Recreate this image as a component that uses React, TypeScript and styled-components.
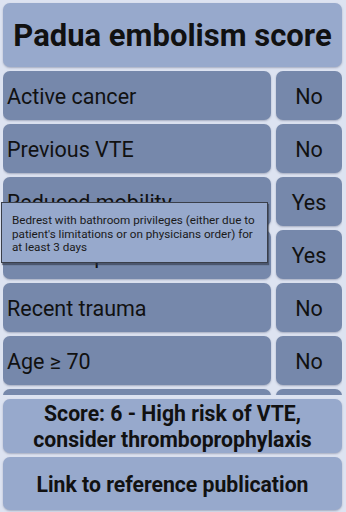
import React from "react";
import styled, { createGlobalStyle } from "styled-components";

const Global = createGlobalStyle`
  html, body { margin: 0; padding: 0; background: #dde3f1; }
  body { font-family: Roboto, "Noto Sans", sans-serif; color: #111; }
  * { box-sizing: border-box; }
`;

const Screen = styled.div`
  width: 346px;
  height: 512px;
  background: #dde3f1;
  padding: 3px 4px 2px 3px;
  display: flex;
  flex-direction: column;
  gap: 4px;
  overflow: hidden;
  position: relative;
`;

const Card = styled.div<{ $tone?: "light" | "dark" }>`
  background: ${(p) => (p.$tone === "dark" ? "#7688ab" : "#97a9cc")};
  border-radius: 7px;
  box-shadow: 0 1px 2px rgba(60, 70, 100, 0.35);
  display: flex;
  align-items: center;
`;

const Header = styled(Card)`
  height: 64px;
  justify-content: center;
  font-size: 31px;
  font-weight: 700;
  flex-shrink: 0;
  white-space: nowrap;
`;

const List = styled.div`
  flex: 1;
  min-height: 0;
  overflow: hidden;
  display: flex;
  flex-direction: column;
  gap: 4px;
`;

const Row = styled.div`
  display: flex;
  gap: 5px;
  height: 49px;
  flex-shrink: 0;
`;

const Label = styled(Card)`
  flex: 1;
  padding: 1px 0 0 4px;
  font-size: 21.5px;
  white-space: nowrap;
  overflow: hidden;
`;

const Value = styled(Card)`
  width: 66px;
  padding-top: 1px;
  justify-content: center;
  font-size: 21.5px;
`;

const Footer = styled(Card)<{ $h: number }>`
  height: ${(p) => p.$h}px;
  flex-shrink: 0;
  justify-content: center;
  text-align: center;
  font-size: 21.2px;
  font-weight: 700;
  line-height: 26px;
  padding-top: 2px;
`;

const Tooltip = styled.div`
  position: absolute;
  left: 1px;
  top: 202px;
  width: 267px;
  padding: 11px 6px 7px 10px;
  background: #97a9cc;
  border: 1px solid #3a3f4a;
  box-shadow: 1px 2px 1px rgba(40, 45, 60, 0.55);
  font-size: 11.7px;
  line-height: 13.5px;
  color: #1a1a1a;
`;

const rows: [string, string][] = [
  ["Active cancer", "No"],
  ["Previous VTE", "No"],
  ["Reduced mobility", "Yes"],
  ["Thrombophilia", "Yes"],
  ["Recent trauma", "No"],
  ["Age ≥ 70", "No"],
  ["Heart or respiratory failure", "No"],
];

export default function App() {
  return (
    <>
      <Global />
      <Screen>
        <Header>Padua embolism score</Header>
        <List>
          {rows.map(([l, v]) => (
            <Row key={l}>
              <Label $tone="dark">{l}</Label>
              <Value $tone="dark">{v}</Value>
            </Row>
          ))}
        </List>
        <Footer $h={54}>
          Score: 6 - High risk of VTE,
          <br />
          consider thromboprophylaxis
        </Footer>
        <Footer $h={53}>Link to reference publication</Footer>
        <Tooltip>
          Bedrest with bathroom privileges (either due to patient's limitations or on physicians order) for at least 3 days
        </Tooltip>
      </Screen>
    </>
  );
}
